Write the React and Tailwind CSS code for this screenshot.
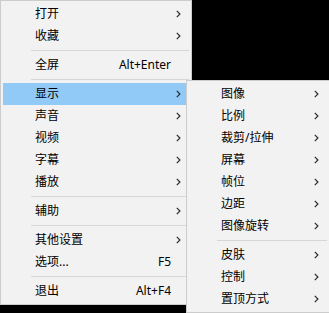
const mainItems = [
  { label: "打开", sub: true },
  { label: "收藏", sub: true },
  { sep: true },
  { label: "全屏", shortcut: "Alt+Enter" },
  { sep: true },
  { label: "显示", sub: true, active: true },
  { label: "声音", sub: true },
  { label: "视频", sub: true },
  { label: "字幕", sub: true },
  { label: "播放", sub: true },
  { sep: true },
  { label: "辅助", sub: true },
  { sep: true },
  { label: "其他设置", sub: true },
  { label: "选项...", shortcut: "F5" },
  { sep: true },
  { label: "退出", shortcut: "Alt+F4" },
];

const displayItems = [
  { label: "图像", sub: true },
  { label: "比例", sub: true },
  { label: "裁剪/拉伸", sub: true },
  { label: "屏幕", sub: true },
  { label: "帧位", sub: true },
  { label: "边距", sub: true },
  { label: "图像旋转", sub: true },
  { sep: true },
  { label: "皮肤", sub: true },
  { label: "控制", sub: true },
  { label: "置顶方式", sub: true },
];

const Chevron = () => (
  <svg width="5" height="8" viewBox="0 0 5 8" fill="none">
    <path d="M0.8 0.8 L3.9 4 L0.8 7.2" stroke="#2b2b2b" strokeWidth="1.2" />
  </svg>
);

const MenuList = ({ items }) => (
  <>
    {items.map((item, i) =>
      item.sep ? (
        <div key={i} className="h-[7px] flex items-center pl-[28px]">
          <div className="h-px w-full bg-[#d7d7d7]" />
        </div>
      ) : (
        <div
          key={i}
          className={`h-[22px] flex items-center pl-[32px] ${item.active ? "bg-[#91c9f7]" : ""}`}
        >
          <span className="flex-1 leading-none">{item.label}</span>
          {item.shortcut && <span className="leading-none">{item.shortcut}</span>}
          <span className="w-[18px] h-full flex items-center pl-[5px]">
            {item.sub && <Chevron />}
          </span>
        </div>
      )
    )}
  </>
);

export default function App() {
  return (
    <div
      className="relative w-[329px] h-[313px] bg-black overflow-hidden text-[12px] text-black"
      style={{ fontFamily: '"Noto Sans", "Noto Sans CJK SC", sans-serif' }}
    >
      {/* main context menu */}
      <div className="w-[192px] bg-[#f2f2f2] border border-[#cccccc] p-[2px]">
        <MenuList items={mainItems} />
      </div>

      {/* 显示 submenu */}
      <div className="absolute left-[186px] top-[80px] w-[144px] bg-[#f2f2f2] border border-[#cccccc] p-[2px]">
        <MenuList items={displayItems} />
      </div>
    </div>
  );
}
